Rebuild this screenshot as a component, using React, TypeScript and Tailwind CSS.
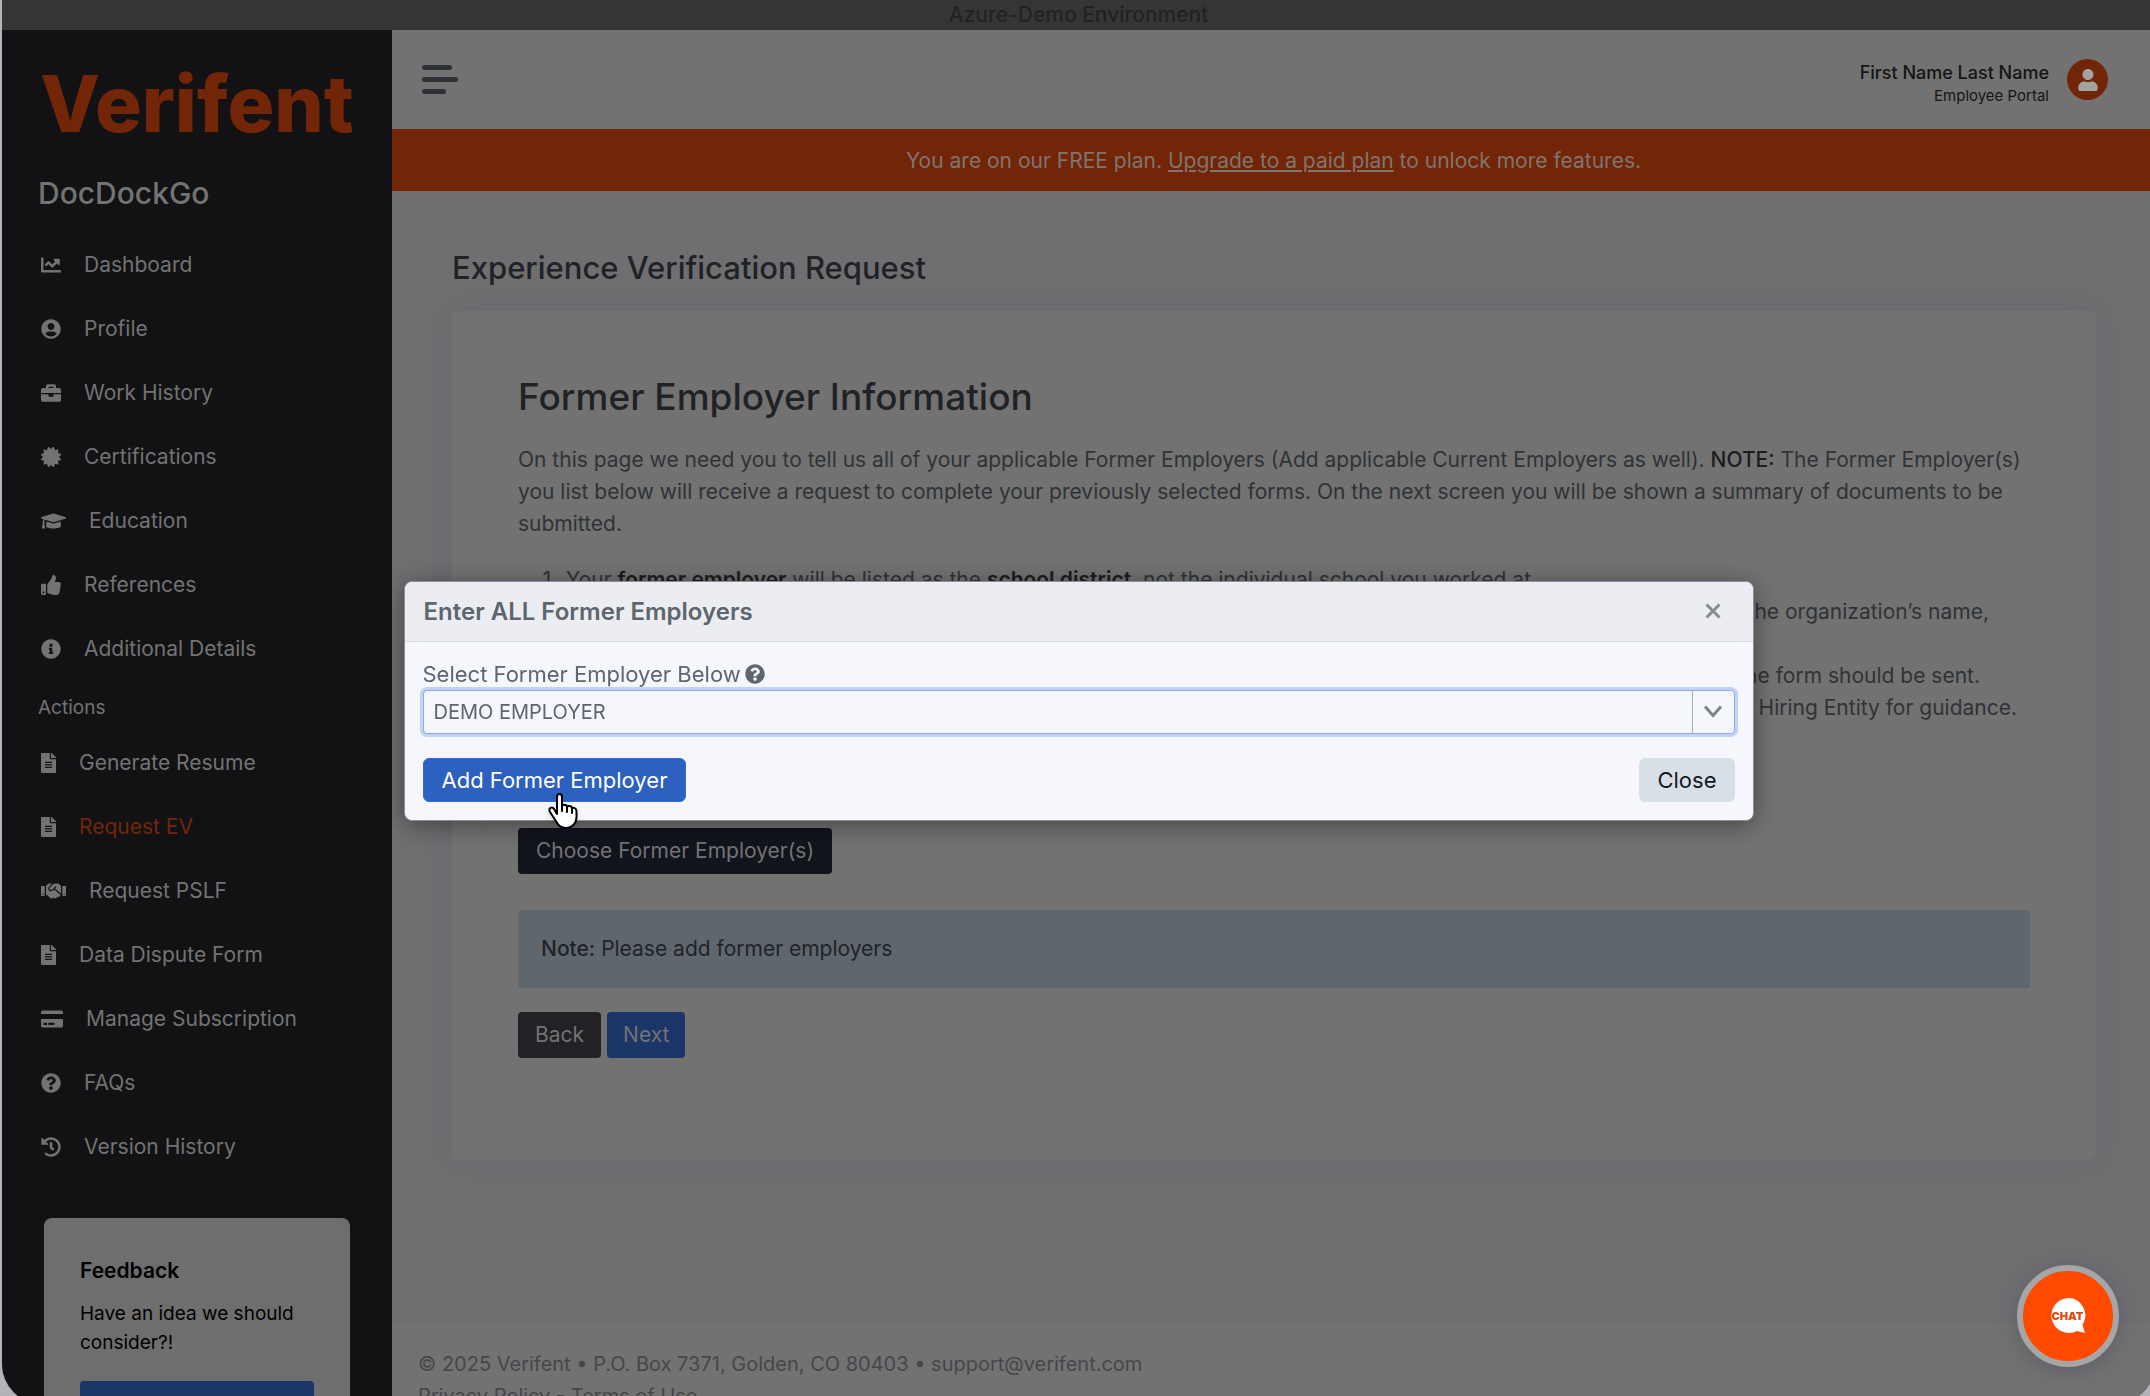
import React from 'react';
import {
    FaBriefcase,
    FaCertificate,
    FaChartLine,
    FaCreditCard,
    FaFileAlt,
    FaGraduationCap,
    FaHandshake,
    FaHistory,
    FaInfoCircle,
    FaQuestionCircle,
    FaThumbsUp,
    FaUser,
    FaUserCircle,
} from 'react-icons/fa';

const profileLinks = [
    { label: 'Dashboard', icon: <FaChartLine className="w-5 h-5" /> },
    { label: 'Profile', icon: <FaUserCircle className="w-5 h-5" /> },
    { label: 'Work History', icon: <FaBriefcase className="w-5 h-5" /> },
    { label: 'Certifications', icon: <FaCertificate className="w-5 h-5" /> },
    { label: 'Education', icon: <FaGraduationCap className="w-[25px] h-5" /> },
    { label: 'References', icon: <FaThumbsUp className="w-5 h-5" /> },
    { label: 'Additional Details', icon: <FaInfoCircle className="w-5 h-5" /> },
];

const actionLinks = [
    { label: 'Generate Resume', icon: <FaFileAlt className="w-[15px] h-5" /> },
    { label: 'Request EV', icon: <FaFileAlt className="w-[15px] h-5" />, active: true },
    { label: 'Request PSLF', icon: <FaHandshake className="w-[25px] h-5" /> },
    { label: 'Data Dispute Form', icon: <FaFileAlt className="w-[15px] h-5" /> },
    { label: 'Manage Subscription', icon: <FaCreditCard className="w-[22px] h-5" /> },
    { label: 'FAQs', icon: <FaQuestionCircle className="w-5 h-5" /> },
    { label: 'Version History', icon: <FaHistory className="w-5 h-5" /> },
];

export default function App() {
    return (
        <div className="h-screen overflow-hidden bg-[#b4b4b8] pl-[2px] font-['Inter',sans-serif] text-[21px] leading-8">
            <div className="h-[calc(100vh+8px)] -mr-[5px] flex flex-col overflow-hidden rounded-b-[40px] bg-[#6f6f71]">
                <div className="h-[30px] shrink-0 bg-[#353535] text-center leading-[29px] font-medium text-[#212226]">
                    Azure-Demo Environment
                </div>
                <div className="flex flex-1 min-h-0">
                    <Sidebar />
                    <div className="flex flex-1 flex-col min-w-0">
                        <Header />
                        <PlanBanner />
                        <RequestPage />
                        <Footer />
                    </div>
                </div>
            </div>
            <EmployerModal />
            <ChatButton />
        </div>
    );
}

function Sidebar() {
    return (
        <aside className="w-[390px] shrink-0 overflow-hidden bg-[#121214] text-[#737373]">
            <div className="pl-[38px] pt-6 text-[78px] leading-[100px] font-extrabold text-[#732507]">Verifent</div>
            <h2 className="pl-[36px] pt-3 text-[30px] leading-[54px] font-medium">DocDockGo</h2>
            <nav className="pt-[13px]">
                {profileLinks.map((link) => (
                    <NavLink key={link.label} {...link} />
                ))}
                <h3 className="h-[50px] pl-[36px] pt-[7px] text-[19px] leading-10">Actions</h3>
                {actionLinks.map((link) => (
                    <NavLink key={link.label} {...link} />
                ))}
            </nav>
            <div className="mx-[42px] mt-[39px] h-[260px] rounded-lg bg-[#6e6e6e] px-9 pt-[37px] text-black">
                <h4 className="leading-8 font-semibold">Feedback</h4>
                <p className="pt-3 text-[19px] leading-[29px]">Have an idea we should consider?!</p>
                <button aria-label="Submit feedback" className="mt-6 h-12 w-full rounded bg-[#1c3569]"></button>
            </div>
        </aside>
    );
}

function NavLink({ label, icon, active }: { label: string, icon: React.ReactNode, active?: boolean }) {
    return (
        <a href="#" className="flex h-16 items-center gap-[23px] pl-[39px]">
            {icon}
            <span className={active ? 'text-[#732507]' : ''}>{label}</span>
        </a>
    );
}

function Header() {
    return (
        <header className="flex h-[99px] shrink-0 items-center justify-between bg-[#727272] pl-[30px] pr-[47px]">
            <button aria-label="Toggle menu" className="flex flex-col gap-[7px]">
                <span className="h-[5px] w-[30px] rounded-sm bg-[#2d3035]"></span>
                <span className="h-[5px] w-9 rounded-sm bg-[#2d3035]"></span>
                <span className="h-[5px] w-6 rounded-sm bg-[#2d3035]"></span>
            </button>
            <div className="flex items-center gap-[18px] text-right text-[#151515]">
                <div className="pt-2">
                    <div className="text-[18px] leading-6 font-medium">First Name Last Name</div>
                    <div className="text-[15px] leading-[22px]">Employee Portal</div>
                </div>
                <span className="flex h-[41px] w-[41px] items-center justify-center rounded-full bg-[#732507] text-[#a3a3a3]">
                    <FaUser className="w-5 h-[22px]" />
                </span>
            </div>
        </header>
    );
}

function PlanBanner() {
    return (
        <div className="h-[62px] shrink-0 bg-[#732507] text-center leading-[63px] text-[#7f756f]">
            You are on our FREE plan. <a href="#" className="underline">Upgrade to a paid plan</a> to unlock more features.
        </div>
    );
}

function RequestPage() {
    return (
        <main className="flex-1 pl-[60px] pr-[59px] pt-14">
            <h1 className="text-[31px] leading-[42px] font-medium text-[#212226]">Experience Verification Request</h1>
            <section className="mt-[22px] rounded-md bg-[#727272] px-[30px] pt-[30px] pb-[65px] shadow-[0_0_24px_rgba(90,90,110,0.25)]">
                <div className="rounded border border-[#6f6f70] px-[35px] pt-[30px] pb-9 text-[#303236]">
                    <h2 className="text-[37px] leading-[50px] font-medium text-[#212226]">Former Employer Information</h2>
                    <p className="pt-[22px]">
                        On this page we need you to tell us all of your applicable Former Employers (Add applicable Current Employers as well). <b className="font-medium text-[#1c1d20]">NOTE:</b> The Former Employer(s) you list below will receive a request to complete your previously selected forms. On the next screen you will be shown a summary of documents to be submitted.
                    </p>
                    <ol className="list-decimal pt-6 pl-12">
                        <li>
                            Your <b className="font-semibold text-[#1c1d20]">former employer</b> will be listed as the <b className="font-semibold text-[#1c1d20]">school district</b>, not the individual school you worked at.
                        </li>
                        <li className="pr-[41px] pb-8 text-right">the organization’s name,</li>
                        <li className="pr-[50px] text-right">the form should be sent.</li>
                        <li className="pr-[13px] text-right">your Hiring Entity for guidance.</li>
                    </ol>
                    <button className="mt-[104px] block h-[46px] rounded bg-[#12141c] px-[18px] text-[#737373]">Choose Former Employer(s)</button>
                    <div className="mt-9 rounded bg-[#5f676d] px-[23px] py-[23px] text-[#202328]">
                        <b className="font-medium">Note:</b> Please add former employers
                    </div>
                    <div className="mt-6 flex gap-[6px]">
                        <button className="h-[46px] rounded bg-[#212126] px-[17px] text-[#737373]">Back</button>
                        <button className="h-[46px] rounded bg-[#1c3569] px-4 text-[#737373]">Next</button>
                    </div>
                </div>
            </section>
        </main>
    );
}

function Footer() {
    return (
        <footer className="h-20 shrink-0 bg-[#727272] pl-[26px] pt-6 text-[20px] text-[#45474b]">
            <div>© 2025 Verifent • P.O. Box 7371, Golden, CO 80403 • support@verifent.com</div>
            <div>
                <a href="#">Privacy Policy</a> - <a href="#">Terms of Use</a>
            </div>
        </footer>
    );
}

function EmployerModal() {
    return (
        <div className="fixed inset-0 flex items-center justify-center pl-[7px] pt-[5px]">
            <div role="dialog" aria-labelledby="employer-title" className="w-[1350px] rounded-lg border border-[#8d8f94] bg-[#f5f7fd] text-[22px] text-[#5d656d] shadow-[0_4px_24px_rgba(0,0,0,0.4)]">
                <div className="flex h-[60px] items-center justify-between rounded-t-lg border-b border-[#d9dce2] bg-[#ecedf3] pl-[19px] pr-8">
                    <h2 id="employer-title" className="pt-px text-[24px] font-semibold">Enter ALL Former Employers</h2>
                    <button aria-label="Close dialog">
                        <svg viewBox="0 0 16 16" className="h-4 w-4 stroke-[#858b90]" strokeWidth="3" fill="none">
                            <path d="M1.5 1.5l13 13M14.5 1.5l-13 13" />
                        </svg>
                    </button>
                </div>
                <div className="px-[18px] pt-4 pb-[18px]">
                    <label htmlFor="employer" className="flex items-center gap-1">
                        Select Former Employer Below <FaQuestionCircle className="w-5 h-5" />
                    </label>
                    <div className="relative">
                        <select id="employer" className="block h-[44px] w-full appearance-none rounded border border-[#8faae6] bg-[#f5f7fd] pl-[10px] text-[20px] ring-3 ring-[#c3d3f5]">
                            <option>DEMO EMPLOYER</option>
                        </select>
                        <span className="pointer-events-none absolute inset-y-px right-px flex w-[42px] items-center justify-center border-l border-[#a9adb3]">
                            <svg viewBox="0 0 18 13" className="h-[13px] w-[18px] stroke-[#7d858b]" strokeWidth="3" fill="none">
                                <path d="M1 1.500l8 9 8-9" />
                            </svg>
                        </span>
                    </div>
                    <div className="mt-6 flex justify-between">
                        <button className="relative h-11 rounded-md border border-[#2f6be0] bg-[#2d60bf] px-[18px] text-white">
                            Add Former Employer
                            <PointerCursor />
                        </button>
                        <button className="h-11 rounded-md bg-[#d8e0e7] px-[18px] text-[#15191d]">Close</button>
                    </div>
                </div>
            </div>
        </div>
    );
}

function PointerCursor() {
    return (
        <svg viewBox="0 0 30 38" className="absolute left-[124px] top-[33px] h-[38px] w-[30px] drop-shadow-md" fill="#fff" stroke="#000" strokeWidth="2" strokeLinejoin="round" strokeLinecap="round">
            <path d="M9 22V5c0-4 5-4 5 0v9c1-2 5-1.500 5 1 1-2 5-1 5 1.500 1-1.500 4.500-.5 4.500 2.500v6c0 6-4 11-11 11-5 0-7-2-9-6L2 20c-2-4 2-6 4-3z" />
            <path d="M14 13v6M19 15v5M24 17v4" />
        </svg>
    );
}

function ChatButton() {
    return (
        <button aria-label="Open chat" className="fixed right-[31px] bottom-[29px] flex h-[102px] w-[102px] items-center justify-center rounded-full border-[6px] border-[#a6a6a6] bg-[#ff4a00] shadow-[0_4px_20px_rgba(70,75,90,0.5)]">
            <svg viewBox="0 0 36 36" className="h-9 w-9">
                <path d="M18 0a17.500 17.500 0 1 0 9 33l8 2-2.500-8A17.500 17.500 0 0 0 18 0z" fill="#fff" />
                <text x="17.500" y="21.500" textAnchor="middle" fontSize="11" fontWeight="900" fill="#e04a10">CHAT</text>
            </svg>
        </button>
    );
}
